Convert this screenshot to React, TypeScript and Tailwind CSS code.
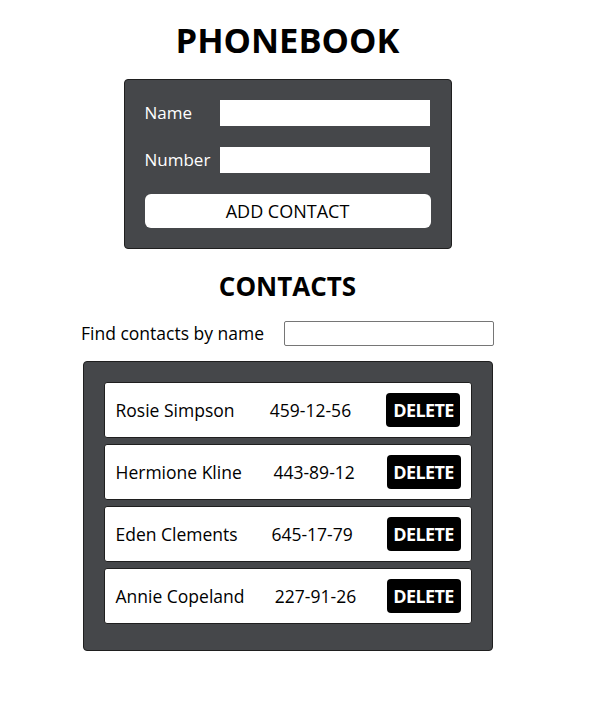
import React from 'react';

const contacts = [
  { id: 1, name: 'Rosie Simpson', number: '459-12-56' },
  { id: 2, name: 'Hermione Kline', number: '443-89-12' },
  { id: 3, name: 'Eden Clements', number: '645-17-79' },
  { id: 4, name: 'Annie Copeland', number: '227-91-26' },
];

const App = () => {
  return (
    <div className="w-[575px] flex flex-col items-center text-black font-['Segoe_UI','Open_Sans',sans-serif]">
      {/* Phonebook form */}
      <h1 className="mt-[18px] text-[34.5px] leading-[44px] font-bold">PHONEBOOK</h1>
      <form className="mt-[17px] w-[328px] bg-[#45474a] border border-[#1f1f1f] rounded-[4px] p-5">
        <label className="flex items-center text-white text-[17px]">
          <span className="w-[75px]">Name</span>
          <input type="text" className="w-[210px] h-[26px] bg-white" />
        </label>
        <label className="mt-[21px] flex items-center text-white text-[17px]">
          <span className="w-[75px]">Number</span>
          <input type="tel" className="w-[210px] h-[26px] bg-white" />
        </label>
        <button
          type="button"
          className="mt-[21px] w-full h-[34px] bg-white rounded-[6px] text-[18px] text-black"
        >
          ADD CONTACT
        </button>
      </form>

      {/* Contacts */}
      <h2 className="mt-[20px] text-[26px] leading-[34px] font-bold">CONTACTS</h2>
      <div className="mt-[17px] flex items-center gap-5">
        <span className="text-[17.5px]">Find contacts by name</span>
        <input type="text" className="w-[210px] h-[25px] border border-[#767676] rounded-[2px]" />
      </div>
      <ul className="mt-[15px] w-[410px] bg-[#45474a] border border-[#1f1f1f] rounded-[4px] px-5 pt-5 pb-[20px]">
        {contacts.map((c) => (
          <li
            key={c.id}
            className="mb-[6px] h-[56px] bg-white border border-[#1f1f1f] rounded-[3px] pl-[11px] pr-[10px] flex items-center justify-between text-[17.5px]"
          >
            <span>{c.name}</span>
            <span>{c.number}</span>
            <button type="button" className="w-[74px] h-[34px] bg-black text-white font-bold rounded-[4px] text-[18px] tracking-[-0.6px]">
              DELETE
            </button>
          </li>
        ))}
      </ul>
    </div>
  );
};

export default App;
